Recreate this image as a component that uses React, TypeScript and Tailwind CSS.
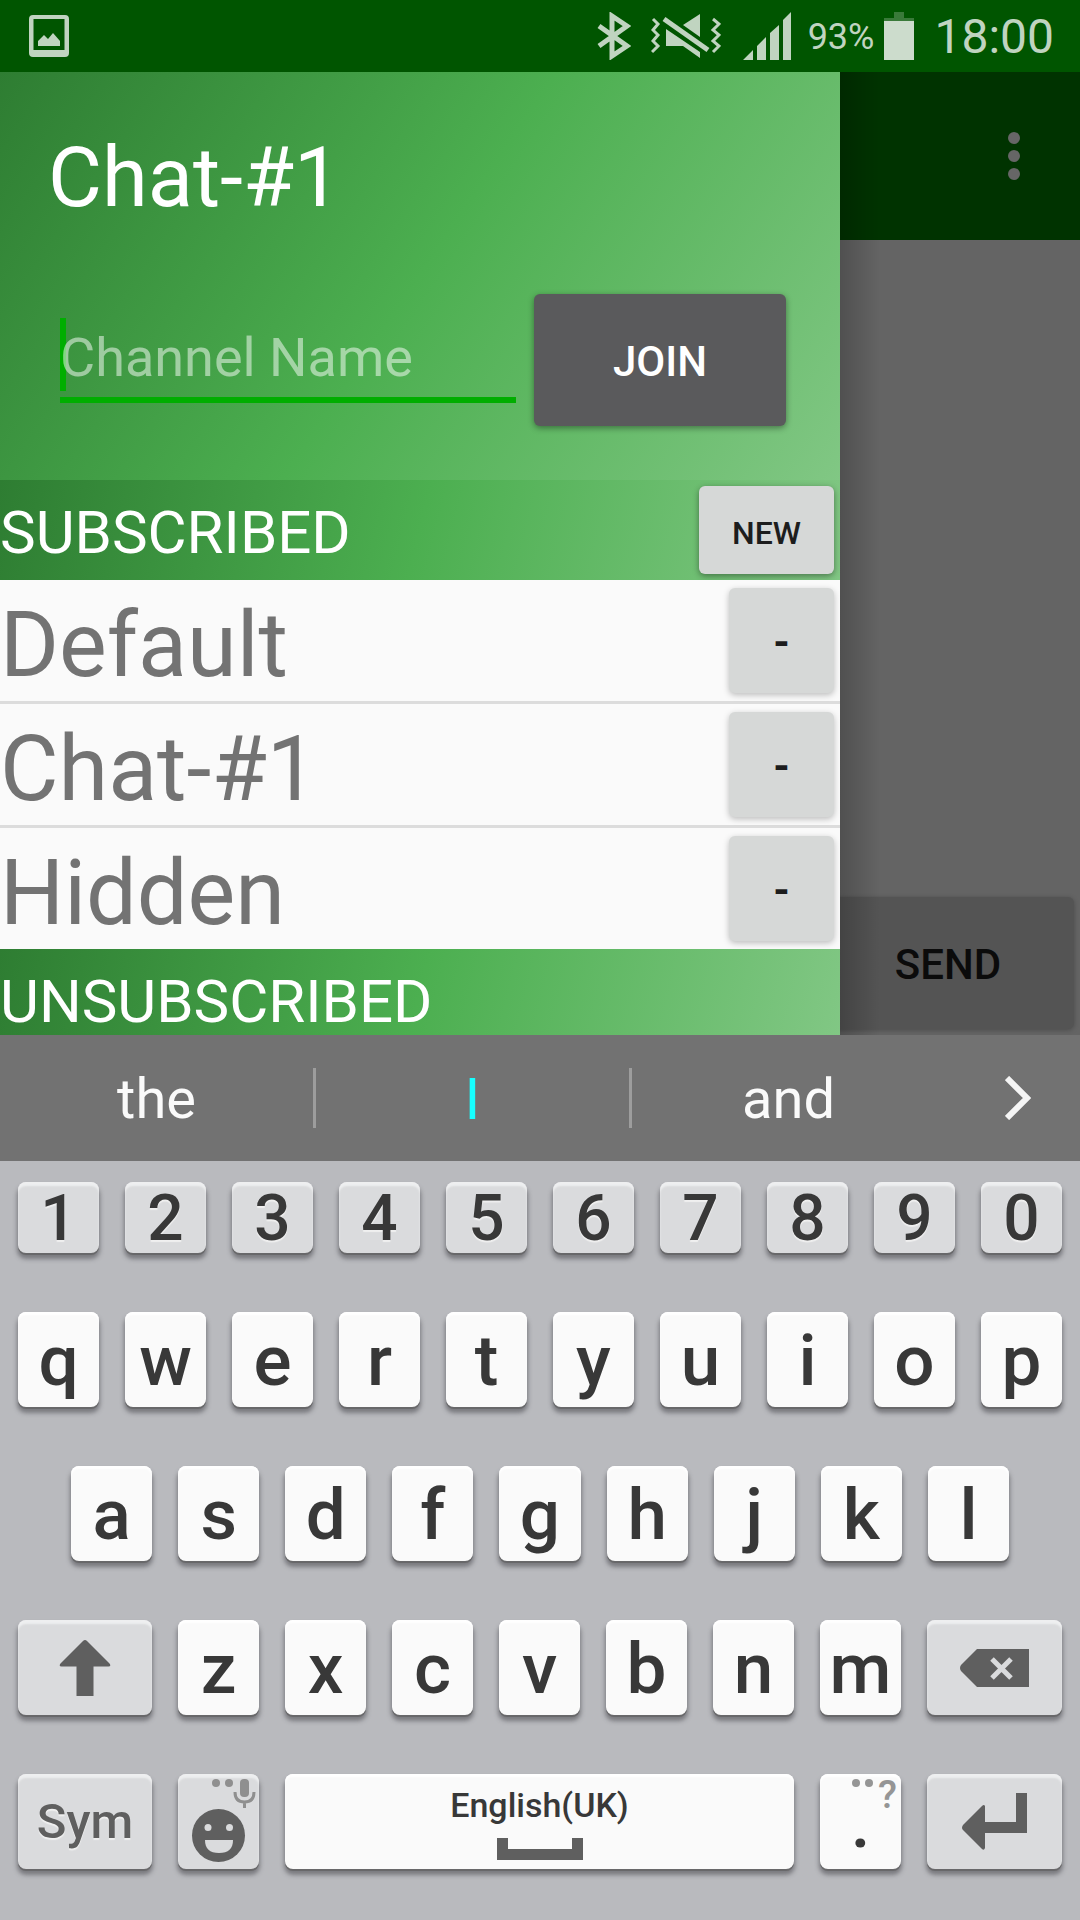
import React from "react";

const keyBase = "flex items-center justify-center rounded-lg font-medium leading-none min-w-0";
const lightKey =
  "bg-[#fafafa] text-[#383838] shadow-[inset_0_3px_2px_#ffffff,0_2px_0_#68686a,0_5px_4px_1px_rgba(60,60,65,0.5)]";
const grayKey =
  "bg-[#dadbdd] shadow-[inset_0_4px_2px_#eeeff0,0_2px_0_#68686a,0_5px_4px_1px_rgba(60,60,65,0.5)]";

function StatusBar() {
  return (
    <header className="flex h-[72px] items-center bg-[#005500] pr-[26px] pl-[29px] text-[#c0d4c0]">
      <svg width="40" height="42" viewBox="0 0 40 42" fill="currentColor" aria-label="Picture saved">
        <path
          fillRule="evenodd"
          d="M4 0h32a4 4 0 0 1 4 4v34a4 4 0 0 1-4 4H4a4 4 0 0 1-4-4V4a4 4 0 0 1 4-4Zm.5 4v31h31V4Z"
        />
        <path d="M9 31v-5l6-6 4 4 5-6 7 8v5Z" />
      </svg>
      <div className="ml-auto flex items-center">
        <svg width="34" height="48" viewBox="0 0 34 48" aria-label="Bluetooth">
          <path d="M2 14 30 34 15 44V4l15 10L2 34" fill="none" stroke="currentColor" strokeWidth="5" />
        </svg>
        <svg className="ml-5" width="70" height="46" viewBox="0 0 70 46" aria-label="Muted">
          <g fill="none" stroke="currentColor" strokeWidth="3">
            <path d="m2 6 5 5-5 6 5 5-5 6 5 5-6 6" />
            <path d="m62 6 6 5-6 6 6 5-6 6 6 5-6 6" />
            <path d="m13 6 44 31" strokeWidth="5" />
          </g>
          <g fill="currentColor">
            <path d="M49 1v23L32 12Z" />
            <path d="m15 16 34 23v6L32 33H15Z" />
          </g>
        </svg>
        <svg className="ml-[22px]" width="48" height="48" viewBox="0 0 48 48" fill="currentColor" aria-label="Signal">
          <path d="M0 48 10 38v10ZM14 34l9-9v23h-9ZM27 21l9-8v35h-9ZM40 8l8-8v48h-8Z" />
        </svg>
        <span className="ml-[17px] pt-0.5 text-[36px] leading-[72px]">93%</span>
        <svg className="ml-2.5" width="30" height="48" viewBox="0 0 30 48" aria-label="Battery">
          <path d="M10 0h10v6H10Z" fill="#397a39" />
          <path d="M0 6h30v3H0Z" fill="#397a39" />
          <path d="M0 9h30v39H0Z" fill="#ccdccc" />
        </svg>
        <time className="ml-5 pt-0.5 text-[48px] leading-[72px]">18:00</time>
      </div>
    </header>
  );
}

function ChatScreen() {
  return (
    <main className="col-start-1 row-start-1 flex flex-col bg-[#646464]">
      <div className="flex h-[168px] items-center justify-end bg-[#003300] pr-[60px]">
        <button type="button" aria-label="More options" className="flex flex-col gap-1.5">
          <span className="size-3 rounded-full bg-[#666666]" />
          <span className="size-3 rounded-full bg-[#666666]" />
          <span className="size-3 rounded-full bg-[#666666]" />
        </button>
      </div>
      <div className="flex flex-1 items-end justify-end p-1.5">
        <button
          type="button"
          className="h-[132px] w-[252px] rounded-md bg-[#545454] pt-0.5 text-[42px] font-medium text-[#0b0b0b] shadow-[0_1px_5px_rgba(0,0,0,0.25)]"
        >
          SEND
        </button>
      </div>
    </main>
  );
}

function SectionTitle({ title, children }: { title: string; children?: React.ReactNode }) {
  return (
    <div className="flex items-start justify-between bg-[linear-gradient(104deg,#2e7d32,#4caf50_50%,#81c784)] pr-1.5">
      <h2 className="pt-5 text-[60px] leading-[66px] text-white">{title}</h2>
      {children}
    </div>
  );
}

function Drawer() {
  const channels = ["Default", "Chat-#1", "Hidden"];
  return (
    <aside className="relative col-start-1 row-start-1 flex w-7/9 flex-col">
      <div className="absolute inset-y-0 left-full w-10 bg-linear-to-r from-black/20 to-transparent" />
      <div className="bg-[linear-gradient(124deg,#2e7d32,#4caf50_50%,#81c784)] pt-14 pb-[54px]">
        <h1 className="pl-12 text-[83px] leading-[100px] text-white">Chat-#1</h1>
        <form className="mt-[66px] flex items-center gap-[18px] pr-[54px] pl-[60px]" onSubmit={(e) => e.preventDefault()}>
          <div className="relative min-w-0 flex-1">
            <span className="absolute top-0 left-0 h-[73px] w-1.5 bg-[#00ae00]" />
            <input
              type="text"
              aria-label="Channel Name"
              placeholder="Channel Name"
              className="relative block h-[85px] w-full border-b-6 border-[#00ae00] bg-transparent text-[54px] text-white outline-none placeholder:text-white/50"
            />
          </div>
          <button
            type="submit"
            className="h-[132px] w-[252px] rounded-md bg-[#5a5a5c] pt-0.5 text-[42px] font-medium text-white shadow-[0_2px_6px_rgba(0,0,0,0.4)]"
          >
            JOIN
          </button>
        </form>
      </div>
      <SectionTitle title="SUBSCRIBED">
        <button
          type="button"
          className="my-1.5 h-[88px] w-[135px] rounded-md bg-[#d6d8d7] pt-1.5 text-[32px] font-medium text-[#1d1d1d] shadow-[0_2px_6px_rgba(0,0,0,0.4)]"
        >
          NEW
        </button>
      </SectionTitle>
      <ul className="divide-y-3 divide-[#dcdcdc] bg-[#fafafa]">
        {channels.map((name) => (
          <li key={name} className="flex items-center justify-between pr-1.5">
            <span className="pt-[11px] text-[90px] leading-[110px] text-[#737373]">{name}</span>
            <button
              type="button"
              aria-label={`Leave ${name}`}
              className="size-[105px] rounded-md bg-[#d6d8d7] pt-1 text-[42px] font-bold text-[#1d1d1d] shadow-[0_2px_6px_rgba(0,0,0,0.25)]"
            >
              -
            </button>
          </li>
        ))}
      </ul>
      <SectionTitle title="UNSUBSCRIBED" />
    </aside>
  );
}

function Suggestions() {
  const cell = "h-full flex-1 pt-0.5 text-center text-[56px] text-[#fafafa]";
  return (
    <div className="flex h-[126px] items-center bg-[#727272]">
      <button type="button" className={cell}>the</button>
      <span className="h-[60px] w-[3px] bg-[#9d9d9d]" />
      <button type="button" className="h-full flex-1 pt-0.5 text-center text-[58px] text-[#16ffff]">I</button>
      <span className="h-[60px] w-[3px] bg-[#9d9d9d]" />
      <button type="button" className={cell}>and</button>
      <button type="button" aria-label="More suggestions" className="flex h-full w-[135px] items-center pl-[60px]">
        <svg width="26" height="44" viewBox="0 0 26 44" fill="none" stroke="#f5f5f5" strokeWidth="6">
          <path d="m2 2 20 20L2 42" />
        </svg>
      </button>
    </div>
  );
}

function Letter({ char }: { char: string }) {
  return (
    <button type="button" className={`${keyBase} ${lightKey} h-[95px] flex-[81] pt-0.5 text-[71px]`}>
      {char}
    </button>
  );
}

function Keyboard() {
  return (
    <section aria-label="Keyboard" className="flex flex-col gap-[59px] bg-[#b9babe] px-[18px] pt-[21px] pb-[51px]">
      <div className="flex gap-[26px]">
        {"1234567890".split("").map((n) => (
          <button
            key={n}
            type="button"
            className={`${keyBase} ${grayKey} h-[71px] flex-[81] pt-0.5 text-[64px] text-[#383838] text-shadow-[0_2px_1px_#f0f0f0]`}
          >
            {n}
          </button>
        ))}
      </div>
      <div className="flex gap-[26px]">
        {"qwertyuiop".split("").map((c) => <Letter key={c} char={c} />)}
      </div>
      <div className="flex gap-[26px] px-[53px]">
        {"asdfghjkl".split("").map((c) => <Letter key={c} char={c} />)}
      </div>
      <div className="flex gap-[26px]">
        <button type="button" aria-label="Shift" className={`${keyBase} ${grayKey} h-[95px] flex-[134]`}>
          <svg width="52" height="56" viewBox="0 0 52 56" fill="#5f5f5f">
            <path d="M24 1q2-2 4 0l22.500 22.500q2 3-1 3H34.500V56h-17V26.500H2.500q-3 0-1-3Z" />
          </svg>
        </button>
        {"zxcvbnm".split("").map((c) => <Letter key={c} char={c} />)}
        <button type="button" aria-label="Backspace" className={`${keyBase} ${grayKey} h-[95px] flex-[135]`}>
          <svg width="69" height="38" viewBox="0 0 69 38">
            <path d="M17 0h52v38H17L1 22q-2-3 0-6Z" fill="#5f5f5f" />
            <path d="m32 10 19 19m0-19L32 29" stroke="#dadbdd" strokeWidth="5" />
          </svg>
        </button>
      </div>
      <div className="flex gap-[26px]">
        <button
          type="button"
          className={`${keyBase} ${grayKey} h-[95px] flex-[134] text-[49px] text-[#5f5f5f] text-shadow-[0_2px_1px_#f0f0f0]`}
        >
          Sym
        </button>
        <button type="button" aria-label="Emoji or voice input" className={`${keyBase} ${grayKey} h-[95px] flex-[81]`}>
          <svg width="81" height="95" viewBox="0 0 81 95">
            <g fill="#8f8f8f">
              <circle cx="38" cy="9" r="4" />
              <circle cx="51" cy="9" r="4" />
              <rect x="62" y="5" width="9" height="18" rx="4" />
            </g>
            <path d="M57 18q0 10 9.500 10T76 18M66.500 28v6" fill="none" stroke="#8f8f8f" strokeWidth="3" />
            <circle cx="40.500" cy="61.500" r="26.500" fill="#5f5f5f" />
            <circle cx="30" cy="53.500" r="3.500" fill="#dadbdd" />
            <circle cx="51.500" cy="53.500" r="3.500" fill="#dadbdd" />
            <path d="M27 66h28q0 13-14 13T27 66Z" fill="#dadbdd" />
          </svg>
        </button>
        <button type="button" className={`${keyBase} ${lightKey} h-[95px] flex-[509] flex-col gap-3 text-[34px]`}>
          <span className="leading-[42px]">English(UK)</span>
          <svg width="86" height="22" viewBox="0 0 86 22">
            <path d="M0 0h11v11h64V0h11v22H0Z" fill="#5f5f5f" />
          </svg>
        </button>
        <button type="button" aria-label="Full stop" className={`${keyBase} ${lightKey} relative h-[95px] flex-[81] pt-0.5 text-[71px]`}>
          .
          <span className="absolute top-0 right-1 flex items-start gap-[5px] text-[39px] text-[#959595]">
            <span className="mt-[5px] size-2 rounded-full bg-[#959595]" />
            <span className="mt-[5px] size-2 rounded-full bg-[#959595]" />
            <span className="leading-[42px]">?</span>
          </span>
        </button>
        <button type="button" aria-label="Enter" className={`${keyBase} ${grayKey} h-[95px] flex-[135]`}>
          <svg width="65" height="57" viewBox="0 0 65 57" fill="#5f5f5f">
            <path d="M54 0h11v40H23v15q-1 3-3 1L1 37q-2-2 0-5l19-19q2-2 3 0v16h31Z" />
          </svg>
        </button>
      </div>
    </section>
  );
}

export default function App() {
  return (
    <div className="flex min-h-screen flex-col bg-[#b9babe] font-['Roboto',sans-serif]">
      <StatusBar />
      <div className="grid flex-1 grid-cols-1">
        <ChatScreen />
        <Drawer />
      </div>
      <Suggestions />
      <Keyboard />
    </div>
  );
}
